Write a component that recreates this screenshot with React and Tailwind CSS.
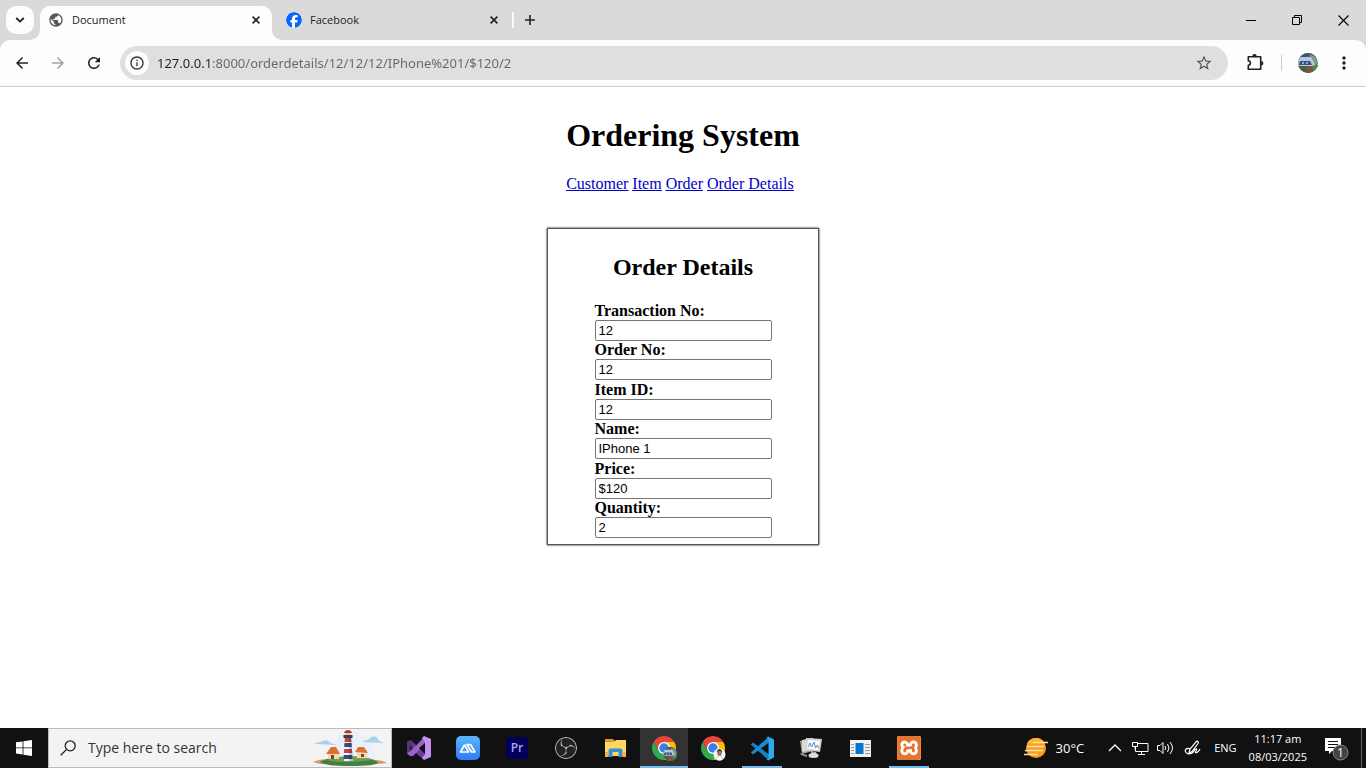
import React from 'react';
import { MdPublic, MdArrowBack, MdArrowForward, MdRefresh, MdInfoOutline, MdStarBorder, MdMoreVert } from 'react-icons/md';
import { FaFacebook } from 'react-icons/fa6';
import { SiXampp, SiObsstudio } from 'react-icons/si';

const fields = [
  { id: 'transaction', label: 'Transaction No:', value: '12' },
  { id: 'order', label: 'Order No:', value: '12' },
  { id: 'item', label: 'Item ID:', value: '12' },
  { id: 'name', label: 'Name:', value: 'IPhone 1' },
  { id: 'price', label: 'Price:', value: '$120' },
  { id: 'quantity', label: 'Quantity:', value: '2' },
];

function CloseIcon() {
  return (
    <svg width="8" height="8" viewBox="0 0 8 8" stroke="#222" strokeWidth="1.6" aria-hidden="true">
      <path d="M.6.6l6.8 6.8M7.4.6L.6 7.4" />
    </svg>
  );
}

function TabStrip() {
  return (
    <header className="flex h-10 bg-[#dadada] pl-1.5">
      <button aria-label="Search tabs" className="mt-1.5 grid size-7 place-items-center rounded-[10px] bg-[#fdfdfd]">
        <svg width="10" height="6" viewBox="0 0 10 6" fill="none" stroke="#222" strokeWidth="1.8"><path d="M1.2 1L5 4.6 8.8 1" /></svg>
      </button>
      <div className="relative mt-1.5 ml-1.5 flex w-[232px] items-center rounded-t-[10px] bg-[#fdfdfd] pr-3 pb-1.5 pl-2">
        <svg className="absolute bottom-0 -left-2.5" width="10" height="10" viewBox="0 0 10 10"><path d="M10 0v10H0A10 10 0 0 0 10 0z" fill="#fdfdfd" /></svg>
        <svg className="absolute -right-2.5 bottom-0" width="10" height="10" viewBox="0 0 10 10"><path d="M0 0v10h10A10 10 0 0 1 0 0z" fill="#fdfdfd" /></svg>
        <MdPublic className="size-4 text-[#54585c]" />
        <span className="ml-2 flex-1 text-[11px] leading-4 text-[#222]">Document</span>
        <button aria-label="Close Document"><CloseIcon /></button>
      </div>
      <div className="mt-1.5 ml-3.5 flex w-[226px] items-center pr-3.5 pb-1.5">
        <FaFacebook className="size-4 rounded-full bg-white text-[#0866ff]" />
        <span className="ml-2 flex-1 text-[11px] leading-4 text-[#222]">Facebook</span>
        <button aria-label="Close Facebook"><CloseIcon /></button>
      </div>
      <div className="mt-3 h-4 w-0.5 rounded bg-[#fafafa]" />
      <button aria-label="New tab" className="ml-1 grid h-10 w-6 place-items-center">
        <svg width="10" height="10" viewBox="0 0 10 10" stroke="#222" strokeWidth="1.6"><path d="M5 0v10M0 5h10" /></svg>
      </button>
      <div className="ml-auto flex">
        <button aria-label="Minimize" className="grid w-[46px] place-items-center">
          <svg width="10" height="10" viewBox="0 0 10 10"><path d="M0 5h10v1H0z" fill="#000" /></svg>
        </button>
        <button aria-label="Restore" className="grid w-[46px] place-items-center">
          <svg width="10" height="10" viewBox="0 0 10 10" fill="none" stroke="#000"><path d="M.5 2.500h7v7h-7zM2.500 2.500v-2h7v7h-2" /></svg>
        </button>
        <button aria-label="Close" className="grid w-[46px] place-items-center">
          <svg width="11" height="11" viewBox="0 0 11 11" stroke="#000" strokeWidth="1.1"><path d="M.5.5l10 10m0-10l-10 10" /></svg>
        </button>
      </div>
    </header>
  );
}

function Toolbar() {
  return (
    <div className="bg-[#dadada]">
      <div className="flex h-[47px] items-center rounded-t-[10px] border-b border-[#cfcfcf] bg-[#fdfdfd] px-3">
        <button aria-label="Back" className="text-[#222]"><MdArrowBack className="size-5 p-px" /></button>
        <button aria-label="Forward" className="ml-4 text-[#a3a3a3]"><MdArrowForward className="size-5 p-px" /></button>
        <button aria-label="Reload" className="ml-4 text-[#222]"><MdRefresh className="size-5 p-px" /></button>
        <div className="ml-4 flex h-[34px] flex-1 items-center rounded-full bg-[#dfdfdf] pr-3.5 pl-[5px]">
          <button aria-label="Site information" className="grid size-6 place-items-center rounded-full bg-[#fdfdfd] text-[#333]"><MdInfoOutline className="size-4" /></button>
          <input
            aria-label="Address"
            defaultValue="127.0.0.1:8000/orderdetails/12/12/12/IPhone%201/$120/2"
            className="ml-2 min-w-0 flex-1 bg-[linear-gradient(90deg,#222_54px,#666_54px)] bg-clip-text font-['Noto_Sans',sans-serif] text-[13px] leading-5 text-transparent caret-black outline-none"
          />
          <button aria-label="Bookmark" className="text-[#555]"><MdStarBorder className="size-5 p-px" /></button>
        </div>
        <button aria-label="Extensions" className="ml-4">
          <svg width="21" height="20" viewBox="0 0 21 20" fill="none" stroke="#222" strokeWidth="1.6" strokeLinejoin="round">
            <path d="M4.300 3.800h12.400v12.400H4.300v-3.800c2.800-.2 2.800-4.400 0-4.600z" />
            <path d="M8.300 3.300a2.200 2.200 0 0 1 4.400 0zM17.200 8a2.200 2.200 0 0 1 0 4.400z" fill="#222" stroke="none" />
          </svg>
        </button>
        <div className="ml-4 h-4 w-px bg-[#cfcfcf]" />
        <button aria-label="Profile" className="ml-4">
          <svg width="20" height="20" viewBox="0 0 20 20">
            <clipPath id="avatar"><circle cx="10" cy="10" r="10" /></clipPath>
            <TruckScene />
          </svg>
        </button>
        <button aria-label="Menu" className="ml-4 text-[#222]"><MdMoreVert className="size-5" /></button>
      </div>
    </div>
  );
}

function TruckScene() {
  return (
    <g clipPath="url(#avatar)">
      <path d="M0 0h20v20H0z" fill="#6f8795" />
      <path d="M0 0h20v5l-5-2-7 1H0z" fill="#38566a" />
      <path d="M11 1l5 2 4 8-4-2z" fill="#7f9f7d" />
      <path d="M3 4h10l4 7v4H2L0 9z" fill="#b4c7dc" />
      <path d="M2 8h10l2 4H1z" fill="#31527f" />
      <path d="M4 9h2v2H4zm4 0h2v2H8z" fill="#82a7cf" />
      <path d="M0 13l20-1v8H0z" fill="#4d5f49" />
      <path d="M2 12h13l1 1H3z" fill="#c5ccd4" />
      <path d="M8 14l8-1 1 7H9z" fill="#80553a" />
      <path d="M14 13l6-1v8l-4-1z" fill="#489345" />
    </g>
  );
}

function Page() {
  return (
    <main className="flex flex-1 flex-col items-center bg-white pt-[29px] font-['Liberation_Serif',serif] text-base text-black">
      <div>
        <h1 className="text-[32px] leading-[38px] font-bold">Ordering System</h1>
        <nav className="mt-[21px] flex gap-1 leading-[18px] text-[#0000c8] underline">
          <a href="#customer">Customer</a>
          <a href="#item">Item</a>
          <a href="#order">Order</a>
          <a href="#details">Order Details</a>
        </nav>
      </div>
      <section className="mt-[35px] flex w-[272px] flex-col items-center border border-[#555] pt-6 pb-1.5 shadow-[0_0_2px_#000]">
        <h2 className="text-[24px] leading-7 font-bold">Order Details</h2>
        <form className="mt-[21px] flex min-h-[236px] w-[177px] flex-col justify-between">
          {fields.map((f) => (
            <div key={f.id} className="flex flex-col">
              <label htmlFor={f.id} className="leading-[18px] font-bold">{f.label}</label>
              <input id={f.id} defaultValue={f.value} className="h-[21px] rounded-xs border border-[#767676] px-[3px] font-['Liberation_Sans',sans-serif] text-[13px] leading-4" />
            </div>
          ))}
        </form>
      </section>
    </main>
  );
}

function Lighthouse() {
  return (
    <svg className="h-[38px] w-[76px]" viewBox="0 0 76 38" aria-hidden="true">
      <path d="M17 36C18 12 26 3 39 2c14 0 22 12 24 34z" fill="#e8f1fa" />
      <path d="M2 15c3-3 6-1 8-3 4-2 6 1 8 2l6 2zM49 13c4-3 6-1 8-4 4-3 8-1 8 2l6 3z" fill="#a9d1ee" />
      <path d="M0 33c6-3 14-3 22-3 14-4 31-2 40 1 5 0 9 1 12 3l-8 1H7z" fill="#d79a70" />
      <path d="M7 33c10-7 46-7 58 0 0 3-11 4-28 4S12 36 7 33z" fill="#477e3f" />
      <path d="M14 31c11-5 36-5 46 0-12 1-32 4-46 0z" fill="#6aa34d" />
      <path d="M15 23h11v7H15zM44 22h10v7H44z" fill="#f5d9b2" />
      <path d="M13 25l5-7h5l4 7zM42 23l3-5h6l4 6z" fill="#df7130" />
      <path d="M18 26h3v4h-3zM48 25h3v3h-3z" fill="#7e402d" />
      <path d="M32 8h6l2 24h-9z" fill="#f4f4f7" />
      <path d="M32 8h6l.5 5h-7z" fill="#c8413c" />
      <path d="M31.500 14h7l.4 4h-7.700zM30.900 26h8.400l.4 4h-9.100z" fill="#354b80" />
      <path d="M31.200 20h7.700l.4 4h-8.400z" fill="#c8413c" />
      <path d="M30.500 6h9v3h-9z" fill="#36405e" />
      <path d="M32.500 3h5v3h-5z" fill="#ffc35f" />
      <path d="M31 4c1-4 7-4 8 0z" fill="#b4373c" />
      <path d="M36 9h2l2 23h-4z" fill="#252c50" opacity=".25" />
    </svg>
  );
}

function VisualStudio() {
  return (
    <svg width="26" height="26" viewBox="0 0 26 26">
      <path d="M1 7l4-2 15 15-3 4L5 14l-3 3-1-1z" fill="#6a3f9b" />
      <path d="M1 7l3-2 3 3v10l-3 3-3-2z" fill="#56347c" />
      <path d="M4 11v4l2-2z" fill="#111" />
      <path d="M4 21l3 0L19 9V1L5 16l-4 2z" fill="#9963cb" />
      <path d="M18 1l7 3v18l-7 3-2-2 3-4V7l-3-4z" fill="#c391ef" />
      <path d="M19 8v10l-6-5z" fill="#111" />
    </svg>
  );
}

function BlueMountains() {
  return (
    <svg width="24" height="24" viewBox="0 0 24 24">
      <linearGradient id="sky" x2="0" y2="1"><stop stopColor="#5ab7fb" /><stop offset="1" stopColor="#2f7bf5" /></linearGradient>
      <rect width="24" height="24" rx="5" fill="url(#sky)" />
      <path d="M4.500 16L8.500 9l4 7zM11 8.500h3.500l4.500 7.500h-3.500z" fill="none" stroke="#fff" strokeWidth="1.700" strokeLinejoin="round" />
    </svg>
  );
}

function Premiere() {
  return <span className="grid size-[22px] place-items-center rounded bg-[#00005b] font-['Open_Sans',sans-serif] text-[12px] leading-none font-semibold text-[#a9a5ff]">Pr</span>;
}

function Folder() {
  return (
    <svg width="23" height="20" viewBox="0 0 23 20">
      <path d="M1 1h8l2 2h11v15H1z" fill="#d89a22" />
      <path d="M1 4h9l2-2h10v16H1z" fill="#ffd765" />
      <path d="M4.500 19v-6.500q0-2 2-2h10q2 0 2 2V19h-4v-5h-6v5z" fill="#338fd0" />
      <path d="M1 14h3.500v5H1zM18.500 14H22v5h-3.500z" fill="#efb83c" />
    </svg>
  );
}

function ChromeIcon({ person }) {
  return (
    <svg width="25" height="25" viewBox="0 0 25 25">
      <path d="M12 6h10.390A12 12 0 0 0 1.610 6L6.800 15z" fill="#e8453c" />
      <path d="M6.800 15L1.610 6A12 12 0 0 0 12 24l5.200-9z" fill="#2da94f" />
      <path d="M17.200 15L12 24A12 12 0 0 0 22.390 6H12z" fill="#fdbd00" />
      <circle cx="12" cy="12" r="6" fill="#fff" />
      <circle cx="12" cy="12" r="4.700" fill="#3a7eed" />
      {person ? (
        <g>
          <circle cx="18.500" cy="18.500" r="6" fill="#f5f5f5" />
          <path d="M15 23c1-4 6-4 7 0-2 2-5 2-7 0z" fill="#fff" stroke="#aaa" strokeWidth=".5" />
          <ellipse cx="18.500" cy="17" rx="2.300" ry="3" fill="#a77461" />
          <path d="M16 17c-1-5 6-5 5 0l-1-2h-3z" fill="#251c1c" />
        </g>
      ) : (
        <svg x="11" y="11" width="14" height="14" viewBox="0 0 20 20"><TruckScene /></svg>
      )}
    </svg>
  );
}

function VsCode() {
  return (
    <svg width="25" height="25" viewBox="0 0 25 25">
      <path d="M.8 8.500L3 6.500l16 12v6z" fill="#1782c6" />
      <path d="M.8 16.500L3 18.500l16-12v-6z" fill="#168bd1" />
      <path d="M18 .5L24 3.500v18L18 24.500l-1.500-1 2-1V2.500l-2-1z" fill="#31a8f2" />
    </svg>
  );
}

function Monitor() {
  return (
    <svg width="24" height="24" viewBox="0 0 24 24">
      <path d="M1 5l13-3v13L3 18z" fill="#9d9f9c" />
      <path d="M3 4l11-2v12L3 16z" fill="#d9dad6" />
      <path d="M7 2l16 1-2 13-14-2z" fill="#d5d6d2" />
      <path d="M9 4l12 1-1.500 9L8 12.500z" fill="#f7fbff" />
      <path d="M9 11l2-4 1.500 4L15 6l1.500 6 2-3 1 3" fill="none" stroke="#508bd0" />
      <path d="M12 15l5 1 1 3h-6z" fill="#aaa" />
      <ellipse cx="14.500" cy="19.500" rx="5" ry="2.500" fill="#ddd" />
      <path d="M1 17l7 2v2l-6-2z" fill="#999" />
    </svg>
  );
}

function BluePanel() {
  return (
    <svg width="21" height="17" viewBox="0 0 21 17">
      <path d="M0 0h21v17H0z" fill="#f1f1f1" />
      <path d="M5.500 3h8v11h-8z" fill="#0874d1" />
      <path d="M1 4.500h3M1 7.500h3M1 10.500h3M1 13.500h3M15 4.500h5M15 7.500h5M15 10.500h5M15 13.500h5" stroke="#999" />
    </svg>
  );
}

const apps = [
  { name: 'Visual Studio', icon: <VisualStudio /> },
  { name: 'Mountain app', icon: <BlueMountains /> },
  { name: 'Premiere Pro', icon: <Premiere /> },
  { name: 'OBS Studio', icon: <SiObsstudio className="size-[22px] rounded-full bg-[#222] text-[#bbb]" /> },
  { name: 'File Explorer', icon: <Folder /> },
  { name: 'Chrome', icon: <ChromeIcon />, active: true },
  { name: 'Chrome, second profile', icon: <ChromeIcon person /> },
  { name: 'Visual Studio Code', icon: <VsCode />, running: true },
  { name: 'Resource Monitor', icon: <Monitor /> },
  { name: 'Panel', icon: <BluePanel /> },
  { name: 'XAMPP', icon: <span className="grid size-6 place-items-center rounded-xs bg-white"><SiXampp className="size-6 text-[#e8732c]" /></span>, running: true },
];

function Tray() {
  return (
    <div className="ml-auto flex items-center text-[11px] leading-[18px] text-white">
      <button className="flex items-center gap-2 text-[13px]">
        <svg width="24" height="22" viewBox="0 0 24 22">
          <circle cx="12" cy="11" r="10" fill="#f99c20" />
          <path d="M3 6.500C6-1 18-1 21 6.500z" fill="#ffb52e" />
          <path d="M9 5.500h15M3 9.500h17M1 13.500h18M0 17.500h14" stroke="#ffe0a0" strokeWidth="1.500" />
        </svg>
        30°C
      </button>
      <button aria-label="Show hidden icons" className="ml-6">
        <svg width="14" height="8" viewBox="0 0 14 8" fill="none" stroke="#fff" strokeWidth="1.300"><path d="M1 7l6-6 6 6" /></svg>
      </button>
      <button aria-label="Network" className="ml-2.5">
        <svg width="17" height="15" viewBox="0 0 17 15" fill="none" stroke="#fff"><path d="M6 2.500h10v8H3.500V6M9.500 10.500v3M6 13.500h7M.5 1.500h5v4h-5zM3 5.500v3" /></svg>
      </button>
      <button aria-label="Volume" className="ml-2">
        <svg width="17" height="14" viewBox="0 0 17 14" fill="none" stroke="#fff"><path d="M.5 4.500H3l3-3v11l-3-3H.5zM8 5q1.500 2 0 4M10.500 3q3 4 0 8M13 1q5 6 0 12" /></svg>
      </button>
      <button aria-label="Pen" className="ml-2.5">
        <svg width="18" height="18" viewBox="0 0 18 18" fill="none" stroke="#fff" strokeWidth="1.200"><path d="M5 14l1-4 6-7c1-2 3 0 2 1.500l-6 8L5 14zM6 10C3 8 0 11 2 13.500s7 1 8-1.500 4-3 2 0 2 2 4-2" /></svg>
      </button>
      <span className="ml-3">ENG</span>
      <div className="ml-3 text-center"><div>11:17 am</div><div>08/03/2025</div></div>
      <button aria-label="1 notification" className="ml-4">
        <svg width="26" height="26" viewBox="0 0 26 26">
          <path d="M2 3h16v13H9l-3 3v-3H2z" fill="#fff" />
          <path d="M5 6.500h10M5 9.500h10M5 12.500h7" stroke="#111" strokeWidth="1.200" />
          <circle cx="17.500" cy="17.500" r="7.500" fill="#444" stroke="#888" />
          <text x="17.500" y="22" textAnchor="middle" fill="#fff" fontSize="12" fontFamily="Open Sans, sans-serif">1</text>
        </svg>
      </button>
      <button aria-label="Show desktop" className="ml-3 h-10 w-[5px] border-l border-[#666]" />
    </div>
  );
}

function Taskbar() {
  return (
    <footer className="flex h-10 bg-[#111]">
      <button aria-label="Start" className="grid w-12 place-items-center">
        <svg width="16" height="16" viewBox="0 0 16 16" fill="#fff"><path d="M0 2.300L6.600 1.400v6.100H0zM7.400 1.300L16 0v7.500H7.400zM0 8.300h6.600v6.200L0 13.600zM7.400 8.300H16V16l-8.600-1.200z" /></svg>
      </button>
      <div className="flex w-[344px] items-center border border-[#bbb] bg-[#f3f3f3] pr-0.5 pl-[11px]">
        <svg width="16" height="16" viewBox="0 0 16 16" fill="none" stroke="#222" strokeWidth="1.300"><circle cx="10.200" cy="5.800" r="5" /><path d="M6.600 9.400L.7 15.300" /></svg>
        <input aria-label="Search" placeholder="Type here to search" className="ml-3 min-w-0 flex-1 text-[14px] leading-5 outline-none placeholder:text-[#333]" />
        <Lighthouse />
      </div>
      <nav aria-label="Applications" className="ml-[3px] flex gap-px">
        {apps.map((app) => (
          <button
            key={app.name}
            aria-label={app.name}
            className={`relative grid w-12 place-items-center ${app.active ? 'bg-[#333]' : ''}`}
          >
            {app.icon}
            {(app.active || app.running) && <span className={`absolute bottom-0 h-0.5 bg-[#76b9ed] ${app.active ? 'inset-x-0' : 'inset-x-1'}`} />}
          </button>
        ))}
      </nav>
      <Tray />
    </footer>
  );
}

export default function App() {
  return (
    <div className="flex min-h-screen flex-col font-['Open_Sans',sans-serif]">
      <TabStrip />
      <Toolbar />
      <Page />
      <Taskbar />
    </div>
  );
}
